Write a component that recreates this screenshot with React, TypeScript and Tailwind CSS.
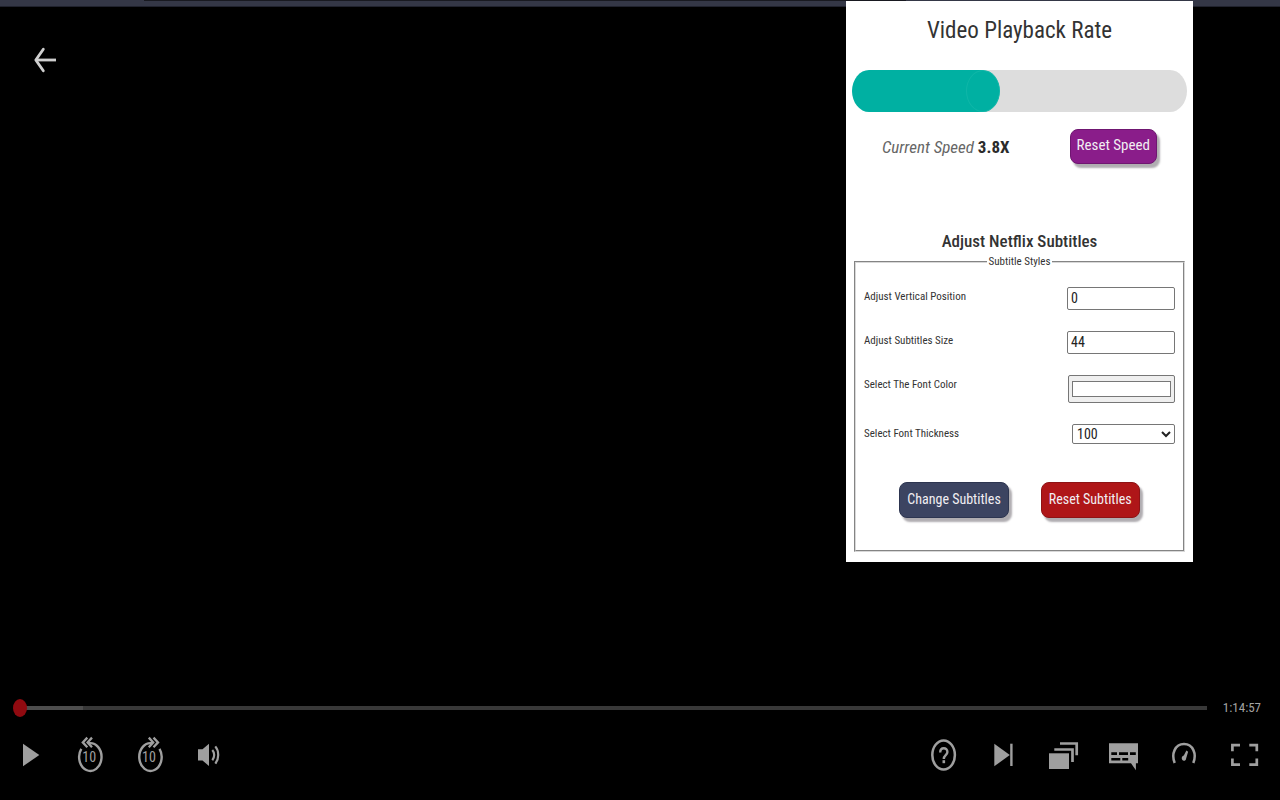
import { useState } from "react";
import type { ReactNode } from "react";

const sans = "font-['Roboto_Condensed',Roboto,'Liberation_Sans',sans-serif]";

function IconButton({ label, children }: { label: string; children: ReactNode }) {
  return (
    <button type="button" aria-label={label} className="flex h-12 w-15 items-center justify-center text-[#9f9f9f]">
      <svg viewBox="0 0 40 48" className="h-12 w-10" fill="none" stroke="currentColor" aria-hidden="true">
        {children}
      </svg>
    </button>
  );
}

function PlayIcon() {
  return <path d="M13 12.7 29.3 24 13 35.3Z" fill="currentColor" stroke="none" />;
}

function Back10Icon() {
  return (
    <>
      <path d="M18.5 12.3A11.2 13.9 0 1 1 11.3 17.8" strokeWidth="2.4" />
      <path d="M17.3 6.6 12.8 11.4 17.3 16.2M22 6.6 17.6 11.4 22 16.2" strokeWidth="2.3" />
      <text x="19.2" y="31.3" textAnchor="middle" fontSize="14" fill="currentColor" stroke="none" className={sans}>10</text>
    </>
  );
}

function Forward10Icon() {
  return (
    <>
      <path d="M22.3 12.3A11.2 13.9 0 1 0 29.5 17.8" strokeWidth="2.4" />
      <path d="M23.5 6.6 28 11.4 23.5 16.2M18.8 6.6 23.2 11.4 18.8 16.2" strokeWidth="2.3" />
      <text x="18.9" y="31.3" textAnchor="middle" fontSize="14" fill="currentColor" stroke="none" className={sans}>10</text>
    </>
  );
}

function VolumeIcon() {
  return (
    <>
      <path d="M8 18.3H12.5L19 12.7V35L12.5 29.5H8Z" fill="currentColor" stroke="none" />
      <path d="M22.3 19C24.8 21.8 24.8 26.4 22.3 29.3M25.3 15.4C29.2 20 29.2 28 25.3 32.6" strokeWidth="2.2" />
    </>
  );
}

function HelpIcon() {
  return (
    <>
      <ellipse cx="19.6" cy="24" rx="11.3" ry="14.6" strokeWidth="2.5" />
      <path d="M16.2 21.4C16.2 15.8 23.4 16 23.4 21C23.4 24.2 19.8 24.2 19.8 28" strokeWidth="2.4" />
      <path d="M18.5 29.2H21.1V32.2H18.5Z" fill="currentColor" stroke="none" />
    </>
  );
}

function NextIcon() {
  return (
    <>
      <path d="M10.3 12.7 25.8 24 10.3 35.3Z" fill="currentColor" stroke="none" />
      <path d="M27.4 12.7V35" strokeWidth="2.4" />
    </>
  );
}

function EpisodesIcon() {
  return (
    <>
      <path d="M5 22.3H25V38H5Z" fill="currentColor" stroke="none" />
      <path d="M10.3 18.5H28.5V31M16 12.5H32.7V24.3" strokeWidth="2.7" />
    </>
  );
}

function SubtitlesIcon() {
  return (
    <>
      <path d="M5 12.2H34V32.2H31.9V39.2L27 32.2H5Z" fill="currentColor" stroke="none" />
      <path d="M7.3 22.6H13M15 22.6H24M26 22.6H31.8M7.3 28.3H16.3M18.3 28.3H24.2" stroke="#000" strokeWidth="2.6" />
    </>
  );
}

function SpeedIcon() {
  return (
    <>
      <path d="M10.7 32C7 23 11 13 20 13S33 23 29.3 32" strokeWidth="2.5" />
      <path d="M22.4 19.6 24.1 20.8 22.2 27.2C21.8 31.2 17 30.2 17.8 26.6C18 25.4 19 25 19.8 24.6Z" fill="currentColor" stroke="none" />
    </>
  );
}

function FullscreenIcon() {
  return <path d="M16 14.2H8.4V20.3M25.3 14.2H32.8V20.3M8.4 27.5V33.7H16M32.8 27.5V33.7H25.3" strokeWidth="2.7" />;
}

const pill = "rounded-lg border pb-0.5 text-[#f1eef2] shadow-[3px_4px_2px_#b0adb1]";
const field = "rounded-xs border border-[#767676] bg-white text-[14px] text-[#222]";

function SpeedPopup() {
  const [speed, setSpeed] = useState(3.8);
  const [position, setPosition] = useState("0");
  const [size, setSize] = useState("44");
  const [color, setColor] = useState("#ffffff");
  const [weight, setWeight] = useState("100");

  const reset = () => {
    setPosition("0");
    setSize("44");
    setColor("#ffffff");
    setWeight("100");
  };

  const share = speed / 10;
  const fill = `calc((100% - 34px) * ${share} + 17px)`;

  return (
    <section className="absolute top-px right-[87px] w-[347px] bg-white pt-[15px] pb-2.5 text-[#333]">
      <h1 className="text-center text-[23px] leading-[30px]">Video Playback Rate</h1>

      <div className="mt-6 px-1.5">
        <input
          type="range"
          aria-label="Playback speed"
          min="0"
          max="10"
          step="0.1"
          value={speed}
          onChange={(e) => setSpeed(Number(e.target.value))}
          style={{ backgroundImage: `linear-gradient(to right, #00b0a2 ${fill}, #ddd ${fill})` }}
          className="block h-[42px] w-full appearance-none rounded-[17px/21px] [&::-webkit-slider-thumb]:h-[42px] [&::-webkit-slider-thumb]:w-[34px] [&::-webkit-slider-thumb]:appearance-none [&::-webkit-slider-thumb]:rounded-[50%] [&::-webkit-slider-thumb]:border [&::-webkit-slider-thumb]:border-[#0fb6a8] [&::-webkit-slider-thumb]:bg-[#00b0a2]"
        />
      </div>

      <div className="mt-[17px] flex items-center justify-between px-9">
        <p className="pt-0.5 text-[17px] text-[#666] italic">
          Current Speed <b className="text-[#2b2b2b] not-italic">{speed.toFixed(1)}X</b>
        </p>
        <button type="button" onClick={() => setSpeed(1)} className={`h-[35px] border-[#6f1671] bg-[#8a1d8a] px-1.5 text-[15px] ${pill}`}>
          Reset Speed
        </button>
      </div>

      <h2 className="mt-16 text-center text-[17px] leading-[26px] font-medium">Adjust Netflix Subtitles</h2>

      <fieldset className="mx-2 border-2 border-[#d8d8d8] px-2 pt-[17px] pb-8 text-[11px] [border-style:groove]">
        <legend className="mx-auto px-0.5 text-[11px] leading-4">Subtitle Styles</legend>

        <div className="flex flex-col gap-[21px]">
          <div className="flex items-start justify-between">
            <label htmlFor="position" className="leading-5">Adjust Vertical Position</label>
            <input id="position" type="text" inputMode="numeric" value={position} onChange={(e) => setPosition(e.target.value)} className={`h-[23px] w-[108px] px-[3px] pb-0.5 ${field}`} />
          </div>
          <div className="flex items-start justify-between">
            <label htmlFor="size" className="leading-5">Adjust Subtitles Size</label>
            <input id="size" type="text" inputMode="numeric" value={size} onChange={(e) => setSize(e.target.value)} className={`h-[23px] w-[108px] px-[3px] pb-0.5 ${field}`} />
          </div>
          <div className="flex items-start justify-between">
            <label htmlFor="color" className="leading-5">Select The Font Color</label>
            <input
              id="color"
              type="color"
              value={color}
              onChange={(e) => setColor(e.target.value)}
              className="h-7 w-[107px] appearance-none rounded-xs border border-[#767676] bg-[#efefef] px-[3px] py-[5px] [&::-webkit-color-swatch]:border-[#777] [&::-webkit-color-swatch-wrapper]:p-0"
            />
          </div>
          <div className="flex items-start justify-between">
            <label htmlFor="weight" className="leading-5">Select Font Thickness</label>
            <select id="weight" value={weight} onChange={(e) => setWeight(e.target.value)} className={`h-5 w-[103px] ${field}`}>
              <option>100</option>
              <option>400</option>
              <option>700</option>
            </select>
          </div>
        </div>

        <div className="mt-[38px] flex justify-center gap-8">
          <button type="button" className={`h-9 border-[#2d3550] bg-[#3c4461] px-[7px] text-[14px] ${pill}`}>Change Subtitles</button>
          <button type="button" onClick={reset} className={`h-9 border-[#8e1315] bg-[#af1618] px-[7px] text-[14px] ${pill}`}>Reset Subtitles</button>
        </div>
      </fieldset>
    </section>
  );
}

export default function App() {
  const [time, setTime] = useState(0);

  return (
    <main className={`relative flex min-h-screen flex-col bg-black ${sans}`}>
      <div className="h-[7px] border-b border-[#20222d] bg-[#343746]">
        <div className="ml-36 h-px w-[762px] bg-[#181920]" />
      </div>

      <button type="button" aria-label="Back" className="mt-9 ml-6 flex h-[34px] w-10 items-center text-[#cfcfcf]">
        <svg viewBox="0 0 40 34" className="h-[34px] w-10" fill="none" stroke="currentColor" strokeWidth="2.8" strokeLinecap="round" strokeLinejoin="round" aria-hidden="true">
          <path d="M19.3 6.2 11.8 17 19.3 27.8" />
          <path d="M12 17H32" strokeLinecap="butt" />
        </svg>
      </button>

      <footer className="mt-auto pb-[21px]">
        <div className="flex items-center gap-4 pr-[19px] pl-[13px]">
          <input
            type="range"
            aria-label="Seek"
            min="0"
            max="4497"
            value={time}
            onChange={(e) => setTime(Number(e.target.value))}
            className="h-5 min-w-0 flex-1 appearance-none bg-transparent [&::-webkit-slider-runnable-track]:h-1 [&::-webkit-slider-runnable-track]:bg-[linear-gradient(to_right,transparent_7px,#4d4d4d_7px,#4d4d4d_70px,#383838_70px)] [&::-webkit-slider-thumb]:-mt-[7px] [&::-webkit-slider-thumb]:h-[18px] [&::-webkit-slider-thumb]:w-3.5 [&::-webkit-slider-thumb]:appearance-none [&::-webkit-slider-thumb]:rounded-[50%] [&::-webkit-slider-thumb]:bg-[#900a10]"
          />
          <span className="text-[13px] leading-5 text-[#a3a3a3]">1:14:57</span>
        </div>

        <div className="mt-[13px] flex items-center justify-between pr-1.5">
          <div className="flex">
            <IconButton label="Play"><PlayIcon /></IconButton>
            <IconButton label="Back 10 seconds"><Back10Icon /></IconButton>
            <IconButton label="Forward 10 seconds"><Forward10Icon /></IconButton>
            <IconButton label="Volume"><VolumeIcon /></IconButton>
          </div>
          <div className="flex">
            <IconButton label="Help"><HelpIcon /></IconButton>
            <IconButton label="Next episode"><NextIcon /></IconButton>
            <IconButton label="Episodes"><EpisodesIcon /></IconButton>
            <IconButton label="Subtitles"><SubtitlesIcon /></IconButton>
            <IconButton label="Playback speed"><SpeedIcon /></IconButton>
            <IconButton label="Full screen"><FullscreenIcon /></IconButton>
          </div>
        </div>
      </footer>

      <SpeedPopup />
    </main>
  );
}
